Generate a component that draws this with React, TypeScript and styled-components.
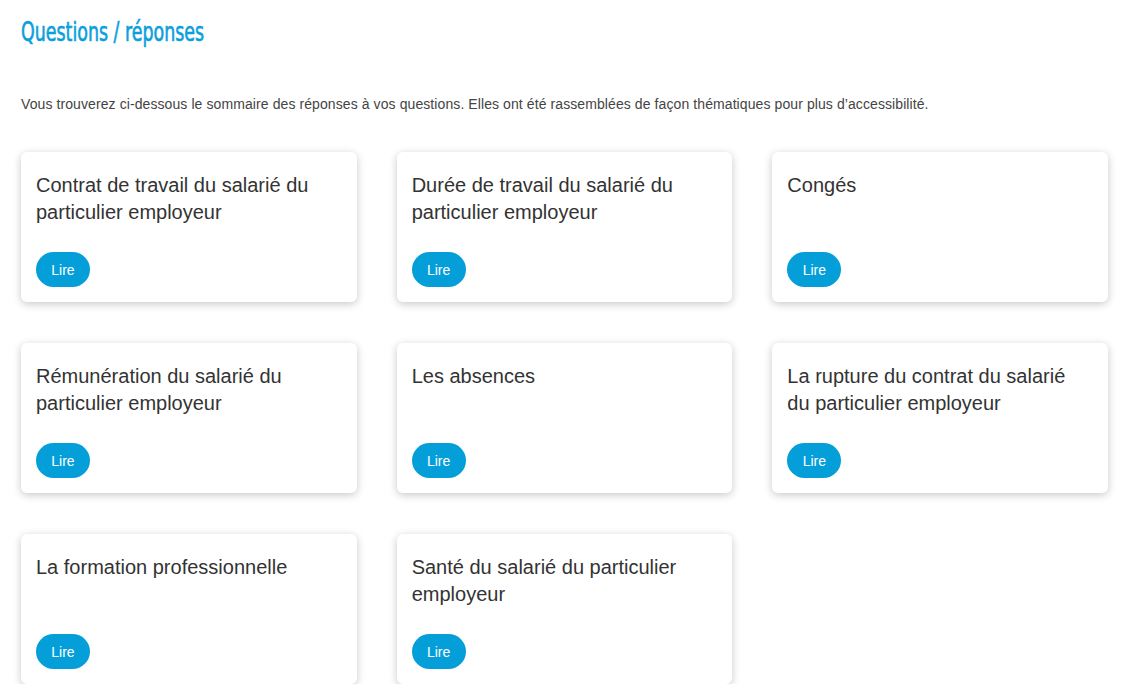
import React from "react";
import styled, { createGlobalStyle } from "styled-components";

const Global = createGlobalStyle`
  html, body { margin: 0; padding: 0; background: #fff; }
  body { font-family: "Liberation Sans", Arial, sans-serif; color: #333; }
`;

const Page = styled.main`
  padding: 15px 19px 0 21px;
`;

const Title = styled.h1`
  margin: 0;
  display: inline-block;
  font-family: "DejaVu Sans Condensed", "Liberation Sans", sans-serif;
  font-weight: 400;
  font-size: 26px;
  line-height: 34px;
  color: #0a9fdc;
  transform: scaleX(0.745);
  transform-origin: left center;
  -webkit-text-stroke: 0.6px #0a9fdc;
`;

const Intro = styled.p`
  margin: 46px 0 0;
  font-size: 14px;
  line-height: 18px;
  letter-spacing: 0.09px;
  color: #444;
`;

const Grid = styled.div`
  margin-top: 39px;
  display: grid;
  grid-template-columns: repeat(3, 1fr);
  column-gap: 40px;
  row-gap: 41px;
`;

const Card = styled.article`
  background: #fff;
  border-radius: 6px;
  box-shadow: 0 2px 8px rgba(0, 0, 0, 0.22);
  height: 150px;
  box-sizing: border-box;
  padding: 20px 16px 15px 15px;
  display: flex;
  flex-direction: column;
  justify-content: space-between;
  align-items: flex-start;
`;

const CardTitle = styled.h2`
  margin: 0;
  font-weight: 400;
  font-size: 20px;
  line-height: 27px;
  color: #333;
`;

const ReadButton = styled.button`
  border: none;
  background: #049fd9;
  color: #fff;
  font-family: "Liberation Sans", Arial, sans-serif;
  font-size: 14px;
  height: 35px;
  width: 54px;
  border-radius: 18px;
  padding: 0;
  cursor: pointer;
`;

const items = [
  "Contrat de travail du salarié du particulier employeur",
  "Durée de travail du salarié du particulier employeur",
  "Congés",
  "Rémunération du salarié du particulier employeur",
  "Les absences",
  "La rupture du contrat du salarié du particulier employeur",
  "La formation professionnelle",
  "Santé du salarié du particulier employeur",
];

export default function App() {
  return (
    <>
      <Global />
      <Page>
        <Title>Questions / réponses</Title>
        <Intro>
          Vous trouverez ci-dessous le sommaire des réponses à vos questions. Elles ont été rassemblées de façon thématiques pour plus d’accessibilité.
        </Intro>
        <Grid>
          {items.map((t) => (
            <Card key={t}>
              <CardTitle>{t}</CardTitle>
              <ReadButton>Lire</ReadButton>
            </Card>
          ))}
        </Grid>
      </Page>
    </>
  );
}
